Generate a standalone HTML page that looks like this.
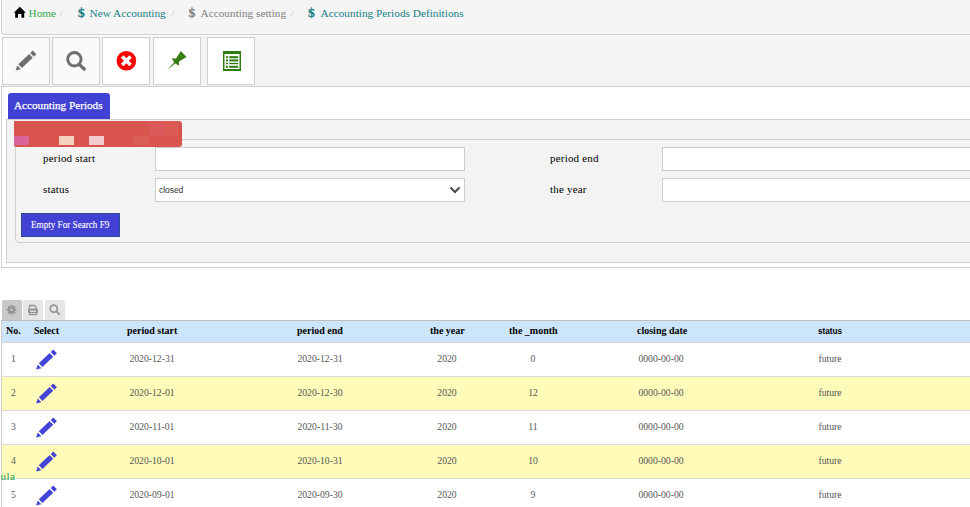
<!DOCTYPE html>
<html><head><meta charset="utf-8">
<style>
html,body{margin:0;padding:0;}
body{width:970px;height:507px;overflow:hidden;position:relative;background:#fff;font-family:"Liberation Serif",serif;}
.a{position:absolute;}
.t{position:absolute;white-space:pre;line-height:1;}
#bc{left:1px;top:-6px;width:1000px;height:39px;border:1px solid #cfcfcf;border-radius:3px;background:#f5f5f5;}
.bct{font-size:11.3px;}
#tb{left:2px;top:35px;width:968px;height:50px;background:#f4f4f4;border-top:1px solid #fff;}
#tbline{left:0;top:86px;width:970px;height:1px;background:#cfcfcf;}
.btn{position:absolute;top:37px;width:46px;height:46px;border:1px solid #cfcfcf;background:#fff;}
#outer{left:1px;top:86px;width:1000px;height:180px;border:1px solid #cfcfcf;background:#fff;}
#tab{left:8px;top:93px;width:102px;height:26px;background:#4141d3;border-radius:3px 3px 0 0;}
#panel{left:6px;top:119px;width:1000px;height:142px;border:1px solid #cfcfcf;background:#f3f3f3;}
#fs{left:15px;top:139px;width:1000px;height:102px;border:1px solid #cfcfcf;border-radius:4px;}
#legend{left:14px;top:121px;width:168px;height:26px;background:#d9534f;border-radius:0 3px 3px 2px;overflow:hidden;}
.lbl{font-size:11px;letter-spacing:0.2px;color:#000;}
.inp{position:absolute;height:22px;border:1px solid #cdcdcd;background:#fff;}
#ebtn{left:21px;top:213px;width:97px;height:22px;background:#4141d3;border:1px solid #2d4f8f;}
.stab{position:absolute;top:300px;width:20px;height:20px;border-radius:2px 2px 0 0;background:#e6e6e6;}
#thead{left:1px;top:320px;width:1000px;height:21px;border-top:1px solid #bdbdbd;border-bottom:1px solid #d4d4d4;border-left:1px solid #cfcfcf;background:#cce5fb;}
.row{position:absolute;left:1px;width:1000px;height:33px;border-bottom:1px solid #d9d9d9;border-left:1px solid #cfcfcf;}
.th{position:absolute;font-weight:bold;font-size:10px;color:#000;white-space:pre;line-height:1;}
.pen{fill:#4444d6;}
.td{position:absolute;font-size:9.7px;color:#555;white-space:pre;line-height:1;}
</style></head><body>

<!-- breadcrumb -->
<div id="bc" class="a"></div>
<svg class="a" style="left:0;top:0" width="30" height="20" viewBox="0 0 30 20">
<path d="M13.9 12.8 L19.8 6.7 L25.9 12.8 L24.2 12.8 L24.2 17.8 L21.4 17.8 L21.4 14 L18 14 L18 17.8 L15.2 17.8 L15.2 12.8 Z" fill="#000"/>
</svg>
<div class="t bct" style="left:28.5px;top:8px;color:#2ea84c">Home</div>
<div class="t bct" style="left:59.5px;top:8px;color:#ccc">/</div>
<div class="t" style="left:78px;top:6px;font-family:'Liberation Serif';font-weight:bold;font-size:13.5px;-webkit-text-stroke:0.3px currentColor;color:#147e84">$</div>
<div class="t bct" style="left:89.5px;top:8px;color:#147e84">New Accounting</div>
<div class="t bct" style="left:171px;top:8px;color:#ccc">/</div>
<div class="t" style="left:188.5px;top:6px;font-family:'Liberation Serif';font-weight:bold;font-size:13.5px;-webkit-text-stroke:0.3px currentColor;color:#808080">$</div>
<div class="t bct" style="left:200.5px;top:8px;color:#808080">Accounting setting</div>
<div class="t bct" style="left:290.5px;top:8px;color:#ccc">/</div>
<div class="t" style="left:308px;top:6px;font-family:'Liberation Serif';font-weight:bold;font-size:13.5px;-webkit-text-stroke:0.3px currentColor;color:#147e84">$</div>
<div class="t bct" style="left:320.5px;top:8px;color:#147e84">Accounting Periods Definitions</div>

<!-- toolbar -->
<div id="tb" class="a"></div>
<div class="btn" style="left:2px;background:#fafafa"></div>
<div class="btn" style="left:52px;background:#fafafa"></div>
<div class="btn" style="left:102px"></div>
<div class="btn" style="left:153px"></div>
<div class="btn" style="left:207px"></div>
<!-- pencil gray -->
<svg class="a" style="left:15px;top:50px" width="22" height="22" viewBox="0 0 22 22" fill="#6f6f6f"><use href="#pencil"/></svg>
<!-- magnifier -->
<svg class="a" style="left:64px;top:49px" width="24" height="24" viewBox="0 0 24 24">
<circle cx="10.4" cy="10.2" r="6.7" fill="none" stroke="#6f6f6f" stroke-width="3"/>
<line x1="15" y1="15.2" x2="21.3" y2="21" stroke="#6f6f6f" stroke-width="3.2"/>
</svg>
<!-- red x -->
<svg class="a" style="left:116px;top:50px" width="22" height="22" viewBox="0 0 22 22">
<circle cx="10.4" cy="10.8" r="9.8" fill="#f00"/>
<path d="M6.2 6.6 L14.6 15 M14.6 6.6 L6.2 15" stroke="#fff" stroke-width="3.6"/>
</svg>
<!-- pin -->
<svg class="a" style="left:160px;top:45px" width="32" height="30" viewBox="0 0 32 30">
<g transform="translate(6.8,25.4) rotate(-44.1)">
<path d="M0 0 L10.8 -0.7 L12.2 -5.3 Q13.2 -3.2 15 -2.2 L23.5 -4.1 L23.5 4.1 L15 2.2 Q13.2 3.2 12.2 5.3 L10.8 0.7 Z" fill="#3a7d10"/>
</g></svg>
<!-- sheet -->
<svg class="a" style="left:223px;top:51px" width="18" height="20" viewBox="0 0 18 20">
<rect x="0" y="0" width="18" height="20" fill="#2f7b10"/>
<rect x="1.5" y="3" width="15" height="15" fill="#fff"/>
<rect x="3" y="5.2" width="2" height="2" fill="#2f7b10"/>
<rect x="6.2" y="5.2" width="9" height="2" fill="#2f7b10"/>
<rect x="3" y="8.4" width="2" height="2" fill="#2f7b10"/>
<rect x="6.2" y="8.4" width="9" height="2" fill="#2f7b10"/>
<rect x="3" y="11.8" width="2" height="1.4" fill="#2f7b10"/>
<rect x="6.2" y="11.8" width="9" height="1.4" fill="#2f7b10"/>
<rect x="3" y="14.8" width="2" height="2" fill="#2f7b10"/>
<rect x="6.2" y="14.8" width="9" height="2" fill="#2f7b10"/>
</svg>

<!-- form box -->
<div id="outer" class="a"></div>
<div id="tab" class="a"></div>
<div class="t" style="left:14px;top:100px;font-size:11.2px;color:#fff;-webkit-text-stroke:0.25px #fff">Accounting Periods</div>
<div id="panel" class="a"></div>
<div id="fs" class="a"></div>
<div id="legend" class="a">
  <div class="a" style="left:135px;top:0;width:15px;height:15px;background:#db5a59"></div>
  <div class="a" style="left:150px;top:0;width:14px;height:15px;background:#da5c55"></div>
  <div class="a" style="left:0;top:15px;width:15px;height:9px;background:#d9649a"></div>
  <div class="a" style="left:45px;top:15px;width:15px;height:9px;background:#f5d2c0"></div>
  <div class="a" style="left:75px;top:15px;width:15px;height:9px;background:#f2cccd"></div>
  <div class="a" style="left:120px;top:15px;width:15px;height:9px;background:#db5e57"></div>
</div>
<div class="t lbl" style="left:43px;top:153px">period start</div>
<div class="t lbl" style="left:43px;top:184px">status</div>
<div class="t lbl" style="left:550px;top:153px">period end</div>
<div class="t lbl" style="left:550px;top:184px">the year</div>
<div class="inp" style="left:155px;top:147px;width:308px"></div>
<div class="inp" style="left:155px;top:178px;width:308px"></div>
<div class="t" style="left:159px;top:186px;font-family:'Liberation Sans';font-size:8.4px;color:#333">closed</div>
<svg class="a" style="left:449px;top:185px" width="12" height="10" viewBox="0 0 12 10">
<path d="M1.5 2.5 L6 7 L10.5 2.5" fill="none" stroke="#4a4a4a" stroke-width="2"/>
</svg>
<div class="inp" style="left:662px;top:147px;width:400px"></div>
<div class="inp" style="left:662px;top:178px;width:400px"></div>
<div id="ebtn" class="a"></div>
<div class="t" style="left:31px;top:219px;font-size:10.8px;color:#fff;-webkit-text-stroke:0.1px #fff;transform:scaleX(0.845);transform-origin:0 0">Empty For Search F9</div>

<!-- table -->
<div class="stab" style="left:2px;background:#c9c9c9"></div>
<div class="stab" style="left:23px"></div>
<div class="stab" style="left:45px"></div>
<svg class="a" style="left:6px;top:304px" width="12" height="12" viewBox="0 0 12 12">
<g fill="#939393"><circle cx="5.6" cy="5.8" r="3.4"/>
<rect x="4.6" y="1" width="2" height="9.6"/><rect x="0.8" y="4.8" width="9.6" height="2"/>
<rect x="4.6" y="1" width="2" height="9.6" transform="rotate(45 5.6 5.8)"/><rect x="0.8" y="4.8" width="9.6" height="2" transform="rotate(45 5.6 5.8)"/></g>
<circle cx="5.6" cy="5.8" r="1.4" fill="#c9c9c9"/>
</svg>
<svg class="a" style="left:27px;top:304px" width="12" height="12" viewBox="0 0 12 12">
<path d="M2.5 4.5 V1.5 H7.5 L9 3 V4.5" fill="none" stroke="#939393" stroke-width="1.3"/>
<rect x="1" y="4.6" width="10" height="4.4" rx="1" fill="#939393"/>
<rect x="3" y="6.6" width="6" height="1.2" fill="#e6e6e6"/>
<path d="M2.5 8.5 V10.5 H9.5 V8.5" fill="none" stroke="#939393" stroke-width="1.3"/>
</svg>
<svg class="a" style="left:48px;top:303px" width="14" height="14" viewBox="0 0 14 14">
<circle cx="5.8" cy="5.7" r="3.5" fill="none" stroke="#939393" stroke-width="1.7"/>
<line x1="8.4" y1="8.4" x2="11.8" y2="11.6" stroke="#939393" stroke-width="1.9"/>
</svg>

<div id="thead" class="a"></div>
<div class="th" style="left:6px;top:326px">No.</div>
<div class="th" style="left:34px;top:326px">Select</div>
<div class="th" style="left:127px;top:326px">period start</div>
<div class="th" style="left:297px;top:326px">period end</div>
<div class="th" style="left:430px;top:326px">the year</div>
<div class="th" style="left:509px;top:326px">the _month</div>
<div class="th" style="left:637px;top:326px">closing date</div>
<div class="th" style="left:818px;top:328px;font-family:'Liberation Sans';font-size:8.2px">status</div>

<svg width="0" height="0" style="position:absolute"><defs><g id="pencil"><g transform="translate(0.6,20.6) rotate(-44)">
<path d="M0 0 L4.8 -2.6 L4.8 2.6 Z"/><rect x="6.3" y="-2.6" width="15" height="5.2"/><rect x="22.8" y="-2.6" width="3.6" height="5.2"/></g></g></defs></svg>
<div class="row" style="top:343px;background:#fff"></div>
<div class="td" style="left:-26.6px;width:80px;text-align:center;top:354px">1</div>
<div class="td" style="left:112px;width:80px;text-align:center;top:354px">2020-12-31</div>
<div class="td" style="left:280px;width:80px;text-align:center;top:354px">2020-12-31</div>
<div class="td" style="left:407px;width:80px;text-align:center;top:354px">2020</div>
<div class="td" style="left:493px;width:80px;text-align:center;top:354px">0</div>
<div class="td" style="left:621px;width:80px;text-align:center;top:354px">0000-00-00</div>
<div class="td" style="left:790px;width:80px;text-align:center;top:354px">future</div>
<svg class="a pen" style="left:35px;top:349px" width="23" height="22" viewBox="0 0 22 22"><use href="#pencil"/></svg>
<div class="row" style="top:377px;background:#fffbb9"></div>
<div class="td" style="left:-26.6px;width:80px;text-align:center;top:388px">2</div>
<div class="td" style="left:112px;width:80px;text-align:center;top:388px">2020-12-01</div>
<div class="td" style="left:280px;width:80px;text-align:center;top:388px">2020-12-30</div>
<div class="td" style="left:407px;width:80px;text-align:center;top:388px">2020</div>
<div class="td" style="left:493px;width:80px;text-align:center;top:388px">12</div>
<div class="td" style="left:621px;width:80px;text-align:center;top:388px">0000-00-00</div>
<div class="td" style="left:790px;width:80px;text-align:center;top:388px">future</div>
<svg class="a pen" style="left:35px;top:383px" width="23" height="22" viewBox="0 0 22 22"><use href="#pencil"/></svg>
<div class="row" style="top:411px;background:#fff"></div>
<div class="td" style="left:-26.6px;width:80px;text-align:center;top:422px">3</div>
<div class="td" style="left:112px;width:80px;text-align:center;top:422px">2020-11-01</div>
<div class="td" style="left:280px;width:80px;text-align:center;top:422px">2020-11-30</div>
<div class="td" style="left:407px;width:80px;text-align:center;top:422px">2020</div>
<div class="td" style="left:493px;width:80px;text-align:center;top:422px">11</div>
<div class="td" style="left:621px;width:80px;text-align:center;top:422px">0000-00-00</div>
<div class="td" style="left:790px;width:80px;text-align:center;top:422px">future</div>
<svg class="a pen" style="left:35px;top:417px" width="23" height="22" viewBox="0 0 22 22"><use href="#pencil"/></svg>
<div class="row" style="top:445px;background:#fffbb9"></div>
<div class="td" style="left:-26.6px;width:80px;text-align:center;top:456px">4</div>
<div class="td" style="left:112px;width:80px;text-align:center;top:456px">2020-10-01</div>
<div class="td" style="left:280px;width:80px;text-align:center;top:456px">2020-10-31</div>
<div class="td" style="left:407px;width:80px;text-align:center;top:456px">2020</div>
<div class="td" style="left:493px;width:80px;text-align:center;top:456px">10</div>
<div class="td" style="left:621px;width:80px;text-align:center;top:456px">0000-00-00</div>
<div class="td" style="left:790px;width:80px;text-align:center;top:456px">future</div>
<svg class="a pen" style="left:35px;top:451px" width="23" height="22" viewBox="0 0 22 22"><use href="#pencil"/></svg>
<div class="row" style="top:479px;background:#fff"></div>
<div class="td" style="left:-26.6px;width:80px;text-align:center;top:490px">5</div>
<div class="td" style="left:112px;width:80px;text-align:center;top:490px">2020-09-01</div>
<div class="td" style="left:280px;width:80px;text-align:center;top:490px">2020-09-30</div>
<div class="td" style="left:407px;width:80px;text-align:center;top:490px">2020</div>
<div class="td" style="left:493px;width:80px;text-align:center;top:490px">9</div>
<div class="td" style="left:621px;width:80px;text-align:center;top:490px">0000-00-00</div>
<div class="td" style="left:790px;width:80px;text-align:center;top:490px">future</div>
<svg class="a pen" style="left:35px;top:485px" width="23" height="22" viewBox="0 0 22 22"><use href="#pencil"/></svg>
<div class="t" style="left:0.6px;top:471px;font-size:11px;letter-spacing:0.4px;color:#25a04a">ula</div>
</body></html>
